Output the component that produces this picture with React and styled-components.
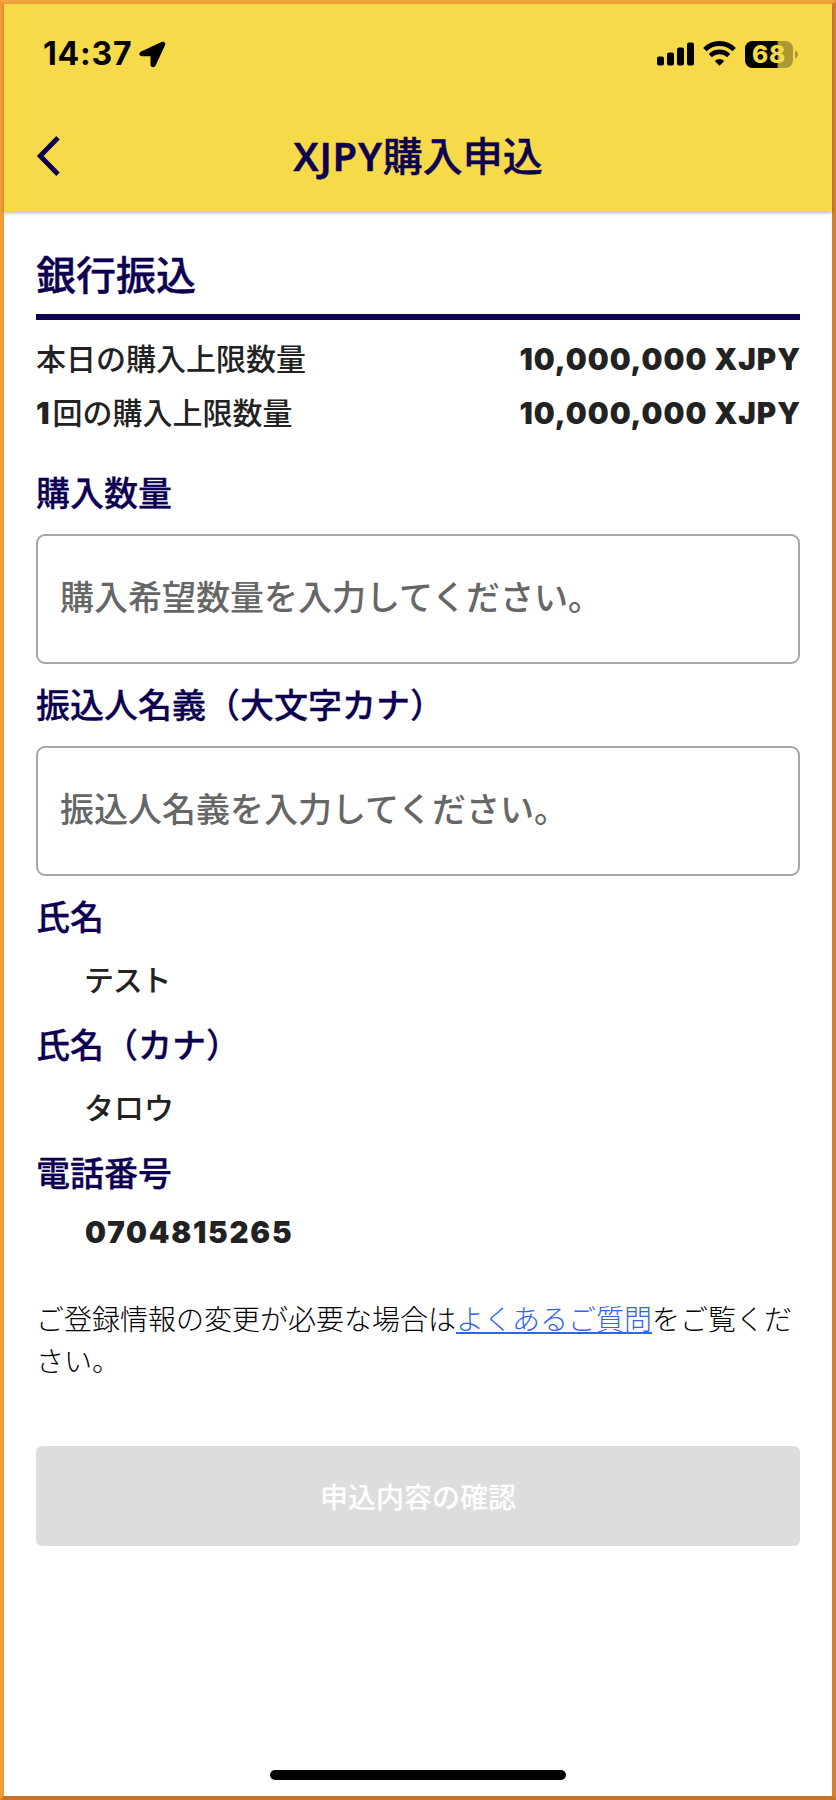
import React, { useState } from 'react'
import styled, { createGlobalStyle } from 'styled-components'

const NAVY = '#0d0050'
const YELLOW = '#f7da4a'

const GlobalStyle = createGlobalStyle`
  * {
    box-sizing: border-box;
  }

  body {
    margin: 0;
    font-family: Inter, "Noto Sans CJK JP", sans-serif;
    color: #222;
  }
`

const Screen = styled.div`
  display: flex;
  flex-direction: column;
  width: 836px;
  height: 1800px;
  background-color: #fff;
  border: 4px solid;
  border-color: #f4a540 #d5802f #c97128 #f29b3a;
`

const Header = styled.header`
  height: 208px;
  flex-shrink: 0;
  background-color: ${YELLOW};
  box-shadow: 0 1px 3px rgba(0, 0, 0, 0.3);
`

const StatusBar = styled.div`
  display: flex;
  align-items: center;
  height: 100px;
  padding: 0 34px 0 39px;
  color: #000;
`

const Time = styled.span`
  font-size: 32px;
  font-weight: 750;
  line-height: 40px;
  letter-spacing: 0.8px;
  margin-inline-end: 7px;
`

const Signals = styled.div`
  display: flex;
  align-items: center;
  gap: 9px;
  margin-inline-start: auto;

  svg {
    display: block;
    overflow: visible;
  }
`

const NavBar = styled.div`
  display: grid;
  grid-template-columns: 60px 1fr 60px;
  align-items: center;
  height: 104px;
  padding: 0 27px;
`

const BackBtn = styled.button`
  display: flex;
  padding: 0 0 0 5px;
  border: none;
  background: none;
  color: ${NAVY};
  cursor: pointer;
`

const PageTitle = styled.h1`
  margin: 0;
  font-family: "Noto Sans", "Noto Sans CJK JP", sans-serif;
  font-size: 40px;
  font-weight: 500;
  line-height: 56px;
  text-align: center;
  color: ${NAVY};
  -webkit-text-stroke: 0.4px ${NAVY};

  span {
    font-weight: 650;
    letter-spacing: 0.7px;
  }
`

const Main = styled.main`
  flex: 1;
  padding: 0 32px;
`

const SectionTitle = styled.h2`
  margin: 0 0 12px;
  padding: 44px 0 18px;
  border-block-end: 6px solid ${NAVY};
  font-size: 40px;
  font-weight: 500;
  line-height: 40px;
  color: ${NAVY};
  -webkit-text-stroke: 0.4px ${NAVY};
`

const LimitRow = styled.div`
  display: flex;
  justify-content: space-between;
  font-size: 30px;
  font-weight: 500;
  line-height: 54px;
`

const Amount = styled.span`
  font-size: 29.5px;
  font-weight: 900;
  line-height: 54px;
  letter-spacing: 0.95px;
  margin-inline-end: -1px;
`

const Prefix = styled.span`
  font-weight: 900;
  letter-spacing: 3px;
`

const Label = styled.h3`
  margin: ${({ $first }) => ($first ? '29px' : '17px')} 0 -1px;
  font-size: 34px;
  font-weight: 500;
  line-height: 50px;
  color: ${NAVY};
  -webkit-text-stroke: 0.3px ${NAVY};
`

const Input = styled.input`
  display: block;
  width: 100%;
  height: 130px;
  margin-block-start: 16px;
  padding: 0 22px 4px;
  border: 2px solid #a6a6a6;
  border-radius: 9px;
  outline: none;
  font-family: inherit;
  font-size: 34px;
  font-weight: 500;
  color: #222;

  &::placeholder {
    color: #666;
    opacity: 1;
  }
`

const Value = styled.p`
  margin: 0;
  padding: 15px 0 1px 48px;
  font-size: 30px;
  font-weight: 500;
  line-height: 46px;
  letter-spacing: ${({ $tracking }) => $tracking || '0'};
`

const Phone = styled.p`
  margin: 0;
  padding: 16px 0 0 49px;
  font-size: 29.5px;
  font-weight: 900;
  line-height: 36px;
  letter-spacing: 1.75px;
`

const Note = styled.p`
  margin: 49px -8px 63px 0;
  font-size: 28px;
  font-weight: 300;
  line-height: 42px;
  color: #000;

  a {
    color: #2f66f0;
    text-decoration: underline;
    text-decoration-thickness: 2px;
    text-underline-offset: 2px;
  }
`

const SubmitBtn = styled.button`
  display: block;
  width: 100%;
  height: 100px;
  border: none;
  border-radius: 6px;
  background-color: #ddd;
  font-family: inherit;
  font-size: 28px;
  font-weight: 500;
  color: #fff;
`

const HomeIndicator = styled.div`
  width: 296px;
  height: 10px;
  margin: 0 auto 16px;
  border-radius: 5px;
  background-color: #000;
`

const LocationIcon = () => (
  <svg width="27" height="27" viewBox="0 0 27 27">
    <path
      d="M2.2 10.6 22.6 1C25 0 27 1.8 26 4.3L16.6 24.6c-1.2 2.6-5.1 2-5.1-1V15.3H3.2C-.2 15.3-.7 12 2.2 10.6Z"
      fill="#000"
    />
  </svg>
)

const CellularIcon = () => (
  <svg width="37" height="27" viewBox="0 0 37 27" fill="#000">
    <rect x="0" y="15.5" width="7" height="9" rx="2" />
    <rect x="10" y="11.5" width="7" height="13" rx="2" />
    <rect x="20" y="6.5" width="7" height="18" rx="2" />
    <rect x="30" y="1.5" width="7" height="23" rx="2" />
  </svg>
)

const WifiIcon = () => (
  <svg width="33" height="27" viewBox="0 0 33 27">
    <path d="M1.9 8.6A20.5 20.5 0 0 1 31.1 8.6" fill="none" stroke="#000" strokeWidth="4.8" />
    <path d="M7.3 14.7A13 13 0 0 1 25.7 14.7" fill="none" stroke="#000" strokeWidth="4.6" />
    <path d="M11.8 20a6.8 6.8 0 0 1 9.4 0L16.5 24.7Z" fill="#000" />
  </svg>
)

const BatteryIcon = ({ level }) => (
  <svg width="53" height="27" viewBox="0 0 53 27">
    <defs>
      <clipPath id="charge">
        <rect x="0" y="0" width={48 * level / 100} height="27" />
      </clipPath>
    </defs>
    <rect width="48" height="27" rx="7.5" fill="#ad9934" />
    <rect width="48" height="27" rx="7.5" fill="#000" clipPath="url(#charge)" />
    <path d="M50 9.5c4 1.5 4 6.5 0 8Z" fill="#ad9934" />
    <text
      x="24"
      y="22.2"
      textAnchor="middle"
      fontFamily="Inter, sans-serif"
      fontSize="24.5"
      fontWeight="800"
      letterSpacing="0.8"
      fill={YELLOW}
    >
      {level}
    </text>
  </svg>
)

const BackIcon = () => (
  <svg width="24" height="40" viewBox="0 0 24 40">
    <path d="M22 1.8 4.2 20 22 38.2" fill="none" stroke="currentColor" strokeWidth="4.8" />
  </svg>
)

const limits = [
  { prefix: '', label: '本日の購入上限数量', amount: '10,000,000 XJPY' },
  { prefix: '1', label: '回の購入上限数量', amount: '10,000,000 XJPY' },
]

const App = () => {
  const [amount, setAmount] = useState('')
  const [payer, setPayer] = useState('')

  return (
    <>
      <GlobalStyle />
      <Screen>
        <Header>
          <StatusBar>
            <Time>14:37</Time>
            <LocationIcon />
            <Signals>
              <CellularIcon />
              <WifiIcon />
              <BatteryIcon level={68} />
            </Signals>
          </StatusBar>
          <NavBar>
            <BackBtn aria-label="戻る">
              <BackIcon />
            </BackBtn>
            <PageTitle><span>XJPY</span>購入申込</PageTitle>
          </NavBar>
        </Header>

        <Main>
          <SectionTitle>銀行振込</SectionTitle>
          {limits.map((limit) => (
            <LimitRow key={limit.label}>
              <span>
                {limit.prefix && <Prefix>{limit.prefix}</Prefix>}
                {limit.label}
              </span>
              <Amount>{limit.amount}</Amount>
            </LimitRow>
          ))}

          <Label $first>購入数量</Label>
          <Input
            value={amount}
            onChange={(e) => setAmount(e.target.value)}
            placeholder="購入希望数量を入力してください。"
          />
          <Label>振込人名義（大文字カナ）</Label>
          <Input
            value={payer}
            onChange={(e) => setPayer(e.target.value)}
            placeholder="振込人名義を入力してください。"
          />

          <Label>氏名</Label>
          <Value $tracking="-1.2px">テスト</Value>
          <Label>氏名（カナ）</Label>
          <Value>タロウ</Value>
          <Label>電話番号</Label>
          <Phone>0704815265</Phone>

          <Note>
            ご登録情報の変更が必要な場合は<a href="#faq">よくあるご質問</a>をご覧ください。
          </Note>
          <SubmitBtn disabled>申込内容の確認</SubmitBtn>
        </Main>

        <HomeIndicator />
      </Screen>
    </>
  )
}

export default App
